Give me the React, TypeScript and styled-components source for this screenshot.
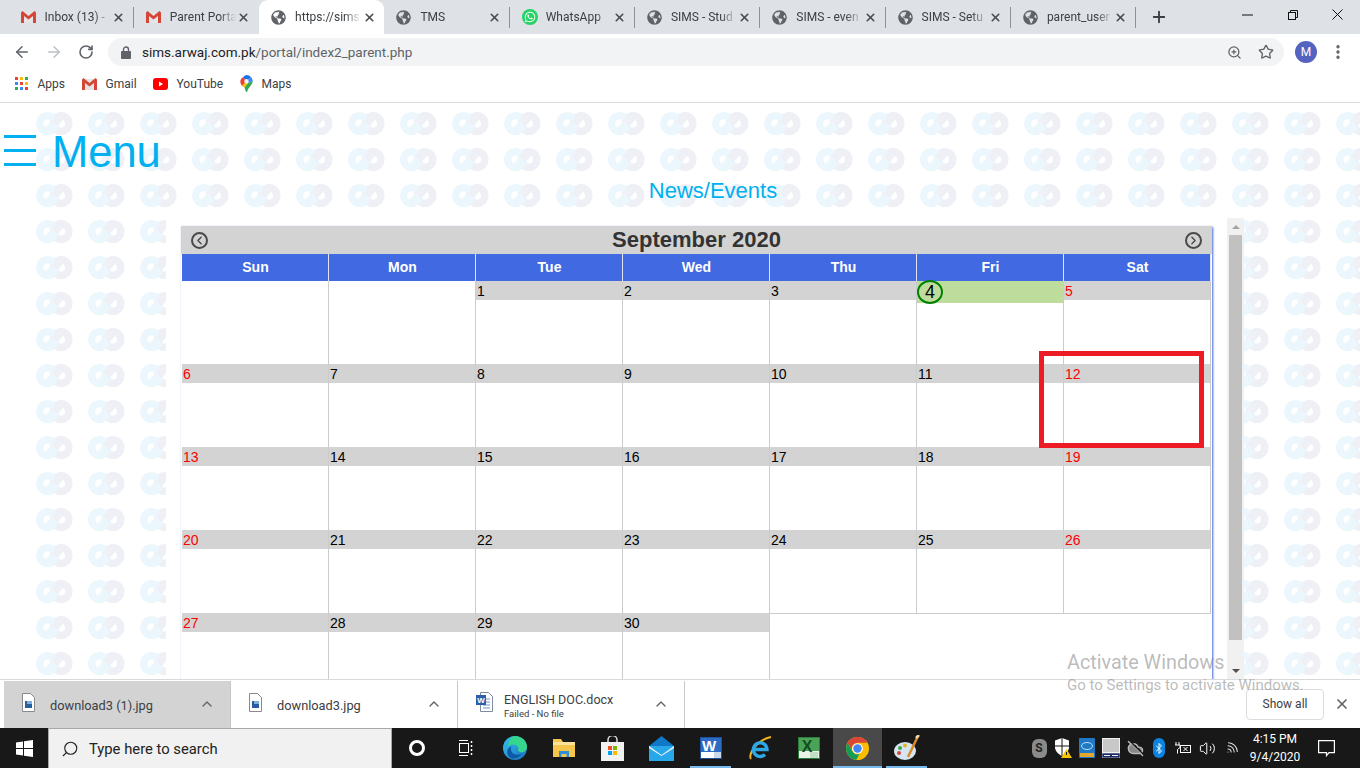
import styled, { createGlobalStyle } from "styled-components";
import {
  ArrowLeft,
  ArrowRight,
  Bluetooth,
  ChevronLeft,
  ChevronRight,
  ChevronUp,
  CloudOff,
  EllipsisVertical,
  Plus,
  RotateCw,
  Search,
  Star,
  Volume2,
  Wifi,
  X,
  ZoomIn,
} from "lucide-react";
import { FaGlobeAmericas, FaWhatsapp } from "react-icons/fa";

const UI_FONT = `Roboto, "Liberation Sans", sans-serif`;
const PAGE_FONT = `"Liberation Sans", Arial, sans-serif`;

const patternSvg = `<svg xmlns="http://www.w3.org/2000/svg" width="52" height="36" viewBox="0 0 52 36"><g fill="none" stroke-width="7.500"><circle cx="25" cy="11.500" r="7.800" stroke="#eff0f6"/><circle cx="11.500" cy="11.500" r="7.800" stroke="#ecf7fd"/><path d="M18 12L27 2" stroke="#eff0f6" stroke-width="8"/><path d="M10 21L18.500 11.500" stroke="#ecf7fd" stroke-width="8"/></g></svg>`;
const patternUrl = `url("data:image/svg+xml,${encodeURIComponent(patternSvg)}")`;

const GlobalStyle = createGlobalStyle`
  html, body {
    margin: 0;
    padding: 0;
    overflow: hidden;
  }
  * {
    box-sizing: border-box;
  }
`;

function GmailIcon() {
  return (
    <svg width="15" height="12" viewBox="0 0 15 12">
      <path d="M1 1h13v11H1z" fill="#e4e4e4" />
      <path d="M0 1.500L1.500 0 7.500 5 13.500 0 15 1.500V12h-3V5L7.500 8.500 3 5v7H0z" fill="#d44638" />
    </svg>
  );
}

function YoutubeIcon() {
  return (
    <svg width="15" height="12" viewBox="0 0 15 12">
      <rect width="15" height="12" rx="3" fill="#f00" />
      <path d="M6 3.500L10 6 6 8.500z" fill="#fff" />
    </svg>
  );
}

function MapsIcon() {
  return (
    <svg width="13" height="17" viewBox="0 0 13 17">
      <path d="M6.500 0A6 6 0 0 1 11 2L6.500 6.500 3 2.200A6 6 0 0 1 6.500 0z" fill="#1a73e8" />
      <path d="M3 2.200L6.500 6.500 2 11C1 9.500.3 8 .3 6.300 .3 4.800 1.500 3.200 3 2.200z" fill="#ea4335" />
      <path d="M11 2c1 1 1.700 2.700 1.700 4.300L8 8 6.500 6.500z" fill="#4285f4" />
      <path d="M12.700 6.300C12.700 9.500 8.500 12 7 17L6 17 4.500 12.500 8 8z" fill="#34a853" />
      <path d="M2 11L6.500 6.500 8 8 4.500 12.500z" fill="#fbbc04" />
      <circle cx="6.500" cy="6.300" r="2.200" fill="#fff" opacity=".9" />
    </svg>
  );
}

function AppsIcon() {
  const colors = ["#ea4335", "#fbbc04", "#34a853", "#4285f4", "#ea4335", "#fbbc04", "#34a853", "#4285f4", "#ea4335"];
  return (
    <svg width="14" height="13" viewBox="0 0 14 13">
      {colors.map((c, i) => (
        <rect key={i} x={(i % 3) * 5} y={Math.floor(i / 3) * 5} width="3" height="3" fill={c} />
      ))}
    </svg>
  );
}

function LockIcon() {
  return (
    <svg width="10" height="13" viewBox="0 0 10 13">
      <path d="M2.500 5V3.500a2.500 2.500 0 0 1 5 0V5" fill="none" stroke="#5f6368" strokeWidth="1.400" />
      <rect y="5" width="10" height="8" rx="1" fill="#5f6368" />
    </svg>
  );
}

function MinimizeGlyph() {
  return (
    <svg width="11" height="2" viewBox="0 0 11 2">
      <path d="M0 1h11" stroke="#111" />
    </svg>
  );
}

function RestoreGlyph() {
  return (
    <svg width="10" height="10" viewBox="0 0 10 10" fill="none" stroke="#111">
      <path d="M2.500 2.500V.5h7v7h-2" />
      <rect x=".5" y="2.500" width="7" height="7" />
    </svg>
  );
}

function CloseGlyph() {
  return (
    <svg width="11" height="11" viewBox="0 0 11 11">
      <path d="M.5.5l10 10M10.500.5l-10 10" stroke="#111" />
    </svg>
  );
}

function FileThumb() {
  return (
    <svg width="13" height="19" viewBox="0 0 13 19">
      <path d="M.5.5h8l4 4v14H.5z" fill="#fff" stroke="#8a8a8a" />
      <rect x="3" y="8" width="7" height="7" fill="#2a5d9c" />
      <rect x="5" y="8" width="5" height="3" fill="#7db0de" />
    </svg>
  );
}

function WordDocIcon() {
  return (
    <svg width="17" height="20" viewBox="0 0 17 20">
      <path d="M4.500.5h8l4 4v15h-12z" fill="#fff" stroke="#7e8ba0" />
      <path d="M7 7h7M7 10h7M7 13h7M7 16h7" stroke="#6b94c9" />
      <rect y="3" width="10" height="10" fill="#2b5faa" />
      <text x="5" y="11" fontSize="8" fontWeight="700" fill="#fff" textAnchor="middle" fontFamily="Liberation Sans">W</text>
    </svg>
  );
}

function WindowsLogo() {
  return (
    <svg width="17" height="17" viewBox="0 0 17 17" fill="#fff">
      <path d="M0 2.400L7 1.400V8H0zM8 1.300L17 0V8H8zM0 9H7V15.600L0 14.600zM8 9H17V17L8 15.700z" />
    </svg>
  );
}

function TaskViewIcon() {
  return (
    <svg width="16" height="16" viewBox="0 0 16 16" fill="none" stroke="#fff">
      <path d="M1 .5h9M1 15.500h9" />
      <rect x="1.500" y="3.500" width="9" height="9" />
      <path d="M13.500 1v2M13.500 5v2M13.500 9v2M13.500 13v2" strokeWidth="1.500" />
    </svg>
  );
}

function EdgeIcon() {
  return (
    <svg width="24" height="24" viewBox="0 0 24 24">
      <defs>
        <linearGradient id="edgeTop" x1="0" y1="0" x2="1" y2="1">
          <stop offset="0" stopColor="#35c1f1" />
          <stop offset="1" stopColor="#1b6fc0" />
        </linearGradient>
      </defs>
      <circle cx="12" cy="12" r="12" fill="url(#edgeTop)" />
      <path d="M12 0c7 0 12 5 12 11 0 4-4 6-7 5-2-.8-2.500-2.500-1.500-4-1-4-8-5-11-1C6 4 8 0 12 0z" fill="#36d68e" />
      <path d="M10 10c-3 0-3 6 1 8 3 1.500 6 .5 8-.5-3 5-9 6-12 4C3 19 3 11 10 10z" fill="#0c59a4" />
    </svg>
  );
}

function FolderIcon() {
  return (
    <svg width="22" height="22" viewBox="0 0 22 22">
      <path d="M0 2h8l2 3h12v15H0z" fill="#f6c54c" />
      <rect y="5" width="22" height="3" fill="#fbe29a" />
      <path d="M6 14h10v6h-2.500v-3h-5v3H6z" fill="#2f8fd6" />
    </svg>
  );
}

function StoreIcon() {
  return (
    <svg width="23" height="25" viewBox="0 0 23 25">
      <path d="M7 7V4a4.500 4.500 0 0 1 9 0v3" fill="none" stroke="#ddd" strokeWidth="1.500" />
      <rect y="6" width="23" height="19" fill="#f2f2f2" />
      <rect x="7" y="10" width="4" height="4" fill="#f25022" />
      <rect x="12" y="10" width="4" height="4" fill="#7fba00" />
      <rect x="7" y="15" width="4" height="4" fill="#00a4ef" />
      <rect x="12" y="15" width="4" height="4" fill="#ffb900" />
    </svg>
  );
}

function MailIcon() {
  return (
    <svg width="25" height="25" viewBox="0 0 25 25">
      <path d="M0 10L12.500 0 25 10z" fill="#0f78c8" />
      <rect y="10" width="25" height="15" fill="#28a8ea" />
      <path d="M0 10l12.500 9L25 10v2l-12.500 8L0 12z" fill="#e8f4fc" />
    </svg>
  );
}

function WordIcon() {
  return (
    <svg width="22" height="22" viewBox="0 0 22 22">
      <rect x=".5" y=".5" width="21" height="21" fill="#fff" stroke="#1f4f9e" />
      <rect x="1" y="1" width="20" height="14" fill="#2d6cc5" />
      <text x="9" y="14" fontSize="15" fontWeight="700" fill="#fff" textAnchor="middle" fontFamily="Liberation Sans">W</text>
      <path d="M14 15h7v6h-7z" fill="#c9d7ea" />
    </svg>
  );
}

function IeIcon() {
  return (
    <svg width="24" height="24" viewBox="0 0 24 24" fill="none">
      <path d="M3 23C0 19 8 4 23 1" stroke="#efb31f" strokeWidth="1.800" />
      <path d="M6 13.500h13a6.800 6.800 0 1 0-2 5" stroke="#2fa7e3" strokeWidth="3.400" />
    </svg>
  );
}

function ExcelIcon() {
  return (
    <svg width="22" height="22" viewBox="0 0 22 22">
      <rect x=".5" y=".5" width="21" height="21" fill="#e9f3e6" stroke="#2f7d3c" />
      <rect x="1" y="1" width="20" height="13" fill="#4aa357" />
      <text x="9" y="15" fontSize="16" fontWeight="700" fill="#134f1f" textAnchor="middle" fontFamily="Liberation Sans">X</text>
      <path d="M12 16h8M12 18h8M12 20h8" stroke="#9cc7a3" />
    </svg>
  );
}

function ChromeIcon() {
  return (
    <svg width="23" height="23" viewBox="0 0 24 24">
      <circle cx="12" cy="12" r="12" fill="#fbbc04" />
      <path d="M1.600 6A12 12 0 0 1 22.400 6H12a6 6 0 0 0-5.200 9z" fill="#db4437" />
      <path d="M1.600 6L6.800 15A6 6 0 0 0 14 17.700L10.600 23.900A12 12 0 0 1 1.600 6z" fill="#0f9d58" />
      <circle cx="12" cy="12" r="5.600" fill="#fff" />
      <circle cx="12" cy="12" r="4.400" fill="#4285f4" />
    </svg>
  );
}

function PaintIcon() {
  return (
    <svg width="26" height="27" viewBox="0 0 26 27">
      <ellipse cx="11" cy="16" rx="11" ry="9" fill="#d5e6f2" />
      <circle cx="6" cy="13" r="2" fill="#3fa34d" />
      <circle cx="11" cy="10.500" r="2" fill="#e6b422" />
      <circle cx="5" cy="18" r="2" fill="#d9453d" />
      <path d="M14 22L24 1" stroke="#d98a2b" strokeWidth="2.500" />
      <path d="M22 3L25 0" stroke="#f3d9a4" strokeWidth="2.500" />
    </svg>
  );
}

function ShieldIcon() {
  return (
    <svg width="18" height="20" viewBox="0 0 18 20">
      <path d="M8 0l7 2.500V9c0 4-3 7-7 9-4-2-7-5-7-9V2.500z" fill="#fff" />
      <path d="M8 0v18M1 8h14" stroke="#161616" />
      <path d="M12.500 11L18 20H7z" fill="#f7c600" />
      <path d="M12.500 14v3" stroke="#161616" />
    </svg>
  );
}

function IntelIcon() {
  return (
    <svg width="16" height="20" viewBox="0 0 16 20">
      <rect width="16" height="20" rx="1" fill="#1f79c4" />
      <rect x="1" y="15" width="14" height="4" fill="#e3a72f" />
      <ellipse cx="8" cy="8" rx="5.500" ry="3.500" fill="none" stroke="#bfe0f7" />
    </svg>
  );
}

function LaptopIcon() {
  return (
    <svg width="18" height="20" viewBox="0 0 18 20">
      <rect x=".5" y=".5" width="17" height="14" fill="#c8c8c8" stroke="#f0f0f0" />
      <rect y="15" width="18" height="5" fill="#1d2a64" stroke="#f0f0f0" strokeWidth=".6" />
      <path d="M2 17.500h6M10 17.500h6" stroke="#f0f0f0" />
    </svg>
  );
}

function PlugIcon() {
  return (
    <svg width="16" height="14" viewBox="0 0 16 14" fill="none" stroke="#fff">
      <path d="M1 1v3M4 1v3M0 4h5v2.500L2.500 8.500v4" />
      <rect x="5.500" y="4.500" width="10" height="7" />
      <path d="M8.500 6l4 4M12.500 6l-4 4" />
    </svg>
  );
}

function ActionCenterIcon() {
  return (
    <svg width="17" height="17" viewBox="0 0 17 17" fill="none" stroke="#fff" strokeWidth="1.200">
      <path d="M.6.6h15.800v12H11l-2.500 3v-3H.6z" />
    </svg>
  );
}

const tabs = [
  { title: "Inbox (13) -", icon: "gmail" },
  { title: "Parent Porta", icon: "gmail" },
  { title: "https://sims", icon: "globe", active: true },
  { title: "TMS", icon: "globe" },
  { title: "WhatsApp", icon: "whatsapp" },
  { title: "SIMS - Stud", icon: "globe" },
  { title: "SIMS - even", icon: "globe" },
  { title: "SIMS - Setu", icon: "globe" },
  { title: "parent_user", icon: "globe" },
];

const weekDays = ["Sun", "Mon", "Tue", "Wed", "Thu", "Fri", "Sat"];
const TODAY = 4;
const LEAD_BLANKS = 2;
const LAST_DAY = 30;

function tabIcon(icon: string) {
  if (icon === "gmail") return <GmailIcon />;
  if (icon === "whatsapp") {
    return (
      <WhatsappBadge>
        <FaWhatsapp size={12} color="#fff" />
      </WhatsappBadge>
    );
  }
  return <FaGlobeAmericas size={15} color="#5f6368" />;
}

function App() {
  const days = Array.from({ length: LAST_DAY }, (_, i) => i + 1);
  const trailing = 35 - LEAD_BLANKS - LAST_DAY;

  return (
    <Screen>
      <GlobalStyle />
      <TabStrip>
        {tabs.map((t, i) => (
          <Tab key={i} $active={t.active} $divider={!t.active && !tabs[i + 1]?.active}>
            <TabIcon>{tabIcon(t.icon)}</TabIcon>
            <TabTitle>{t.title}</TabTitle>
            <TabClose>
              <X size={13} strokeWidth={3} color="#494c50" />
            </TabClose>
          </Tab>
        ))}
        <NewTab>
          <Plus size={18} strokeWidth={2.5} color="#3c4043" />
        </NewTab>
        <WindowControls>
          <WindowButton>
            <MinimizeGlyph />
          </WindowButton>
          <WindowButton>
            <RestoreGlyph />
          </WindowButton>
          <WindowButton>
            <CloseGlyph />
          </WindowButton>
        </WindowControls>
      </TabStrip>

      <Toolbar>
        <NavButton>
          <ArrowLeft size={18} color="#5f6368" />
        </NavButton>
        <NavButton>
          <ArrowRight size={18} color="#bdc1c6" />
        </NavButton>
        <NavButton>
          <RotateCw size={16} strokeWidth={2.4} color="#5f6368" />
        </NavButton>
        <Omnibox>
          <LockIcon />
          <UrlText>
            sims.arwaj.com.pk<UrlPath>/portal/index2_parent.php</UrlPath>
          </UrlText>
          <OmniAction>
            <ZoomIn size={15} color="#5f6368" />
          </OmniAction>
          <OmniAction>
            <Star size={16} color="#5f6368" />
          </OmniAction>
        </Omnibox>
        <Avatar>M</Avatar>
        <MenuDots>
          <EllipsisVertical size={18} strokeWidth={2.5} color="#5f6368" />
        </MenuDots>
      </Toolbar>

      <Bookmarks>
        <Bookmark $width={67}>
          <AppsIcon />
          Apps
        </Bookmark>
        <Bookmark $width={71}>
          <GmailIcon />
          Gmail
        </Bookmark>
        <Bookmark $width={87}>
          <YoutubeIcon />
          YouTube
        </Bookmark>
        <Bookmark $width={70}>
          <MapsIcon />
          Maps
        </Bookmark>
      </Bookmarks>

      <Main>
        <MenuRow>
          <Burger>
            <span />
            <span />
            <span />
          </Burger>
          <MenuLabel>Menu</MenuLabel>
        </MenuRow>
        <NewsTitle>News/Events</NewsTitle>
        <Frame>
          <FrameBody>
            <Calendar>
              <MonthBar>
                <MonthNav>
                  <ChevronLeft size={13} strokeWidth={2.4} color="#444" />
                </MonthNav>
                <MonthTitle>September 2020</MonthTitle>
                <MonthNav>
                  <ChevronRight size={13} strokeWidth={2.4} color="#444" />
                </MonthNav>
              </MonthBar>
              <DaysGrid>
                {weekDays.map((d) => (
                  <WeekHead key={d}>{d}</WeekHead>
                ))}
                {Array.from({ length: LEAD_BLANKS }, (_, i) => (
                  <DayCell key={`lead-${i}`} />
                ))}
                {days.map((d) => {
                  const col = (d + LEAD_BLANKS - 1) % 7;
                  const weekend = col === 0 || col === 6;
                  return (
                    <DayCell key={d}>
                      {d === TODAY ? (
                        <TodayBar>
                          <TodayCircle>{d}</TodayCircle>
                        </TodayBar>
                      ) : (
                        <DayLabel $weekend={weekend}>{d}</DayLabel>
                      )}
                    </DayCell>
                  );
                })}
                {Array.from({ length: trailing }, (_, i) => (
                  <TrailingCell key={`trail-${i}`} />
                ))}
              </DaysGrid>
            </Calendar>
            <Annotation />
          </FrameBody>
          <Scrollbar>
            <ScrollArrow>
              <ArrowUpShape />
            </ScrollArrow>
            <ScrollThumb />
            <ScrollArrow>
              <ArrowDownShape />
            </ScrollArrow>
          </Scrollbar>
        </Frame>
      </Main>

      <DownloadBar>
        <DownloadItem $active>
          <ThumbSlot>
            <FileThumb />
          </ThumbSlot>
          <DownloadName>download3 (1).jpg</DownloadName>
          <DownloadChevron>
            <ChevronUp size={16} color="#5f6368" />
          </DownloadChevron>
        </DownloadItem>
        <DownloadItem>
          <ThumbSlot>
            <FileThumb />
          </ThumbSlot>
          <DownloadName>download3.jpg</DownloadName>
          <DownloadChevron>
            <ChevronUp size={16} color="#5f6368" />
          </DownloadChevron>
        </DownloadItem>
        <DownloadItem>
          <ThumbSlot>
            <WordDocIcon />
          </ThumbSlot>
          <DownloadText>
            <DownloadFile>ENGLISH DOC.docx</DownloadFile>
            <DownloadStatus>Failed - No file</DownloadStatus>
          </DownloadText>
          <DownloadChevron>
            <ChevronUp size={16} color="#5f6368" />
          </DownloadChevron>
        </DownloadItem>
        <ShowAll>Show all</ShowAll>
        <CloseShelf>
          <X size={16} strokeWidth={2.5} color="#5f6368" />
        </CloseShelf>
      </DownloadBar>

      <Taskbar>
        <StartButton>
          <WindowsLogo />
        </StartButton>
        <SearchBox>
          <Search size={18} strokeWidth={1.5} color="#222" style={{ transform: "scaleX(-1)" }} />
          Type here to search
        </SearchBox>
        <TaskSlot>
          <CortanaRing />
        </TaskSlot>
        <TaskSlot>
          <TaskViewIcon />
        </TaskSlot>
        <TaskSlot>
          <EdgeIcon />
        </TaskSlot>
        <TaskSlot>
          <FolderIcon />
        </TaskSlot>
        <TaskSlot>
          <StoreIcon />
        </TaskSlot>
        <TaskSlot>
          <MailIcon />
        </TaskSlot>
        <TaskSlot $running>
          <WordIcon />
        </TaskSlot>
        <TaskSlot>
          <IeIcon />
        </TaskSlot>
        <TaskSlot>
          <ExcelIcon />
        </TaskSlot>
        <TaskSlot $running $active>
          <ChromeIcon />
        </TaskSlot>
        <TaskSlot $running>
          <PaintIcon />
        </TaskSlot>
        <Tray>
          <TrayIcon>
            <SkypeBadge>S</SkypeBadge>
          </TrayIcon>
          <TrayIcon>
            <ShieldIcon />
          </TrayIcon>
          <TrayIcon>
            <IntelIcon />
          </TrayIcon>
          <TrayIcon>
            <LaptopIcon />
          </TrayIcon>
          <TrayIcon>
            <CloudOff size={17} color="#bbb" fill="#888" />
          </TrayIcon>
          <TrayIcon>
            <BluetoothBadge>
              <Bluetooth size={13} color="#fff" />
            </BluetoothBadge>
          </TrayIcon>
          <TrayIcon>
            <PlugIcon />
          </TrayIcon>
          <TrayIcon>
            <Volume2 size={17} strokeWidth={1.4} color="#fff" />
          </TrayIcon>
          <TrayIcon>
            <Wifi size={15} strokeWidth={1.7} color="#ddd" style={{ transform: "rotate(45deg)" }} />
          </TrayIcon>
        </Tray>
        <Clock>
          <span>4:15 PM</span>
          <span>9/4/2020</span>
        </Clock>
        <ActionCenter>
          <ActionCenterIcon />
        </ActionCenter>
      </Taskbar>

      <Watermark>
        <WatermarkTitle>Activate Windows</WatermarkTitle>
        <WatermarkHint>Go to Settings to activate Windows.</WatermarkHint>
      </Watermark>
    </Screen>
  );
}

const Screen = styled.div`
  position: relative;
  width: 1360px;
  height: 768px;
  display: flex;
  flex-direction: column;
  overflow: hidden;
  background: #fff;
  font-family: ${UI_FONT};
`;

const TabStrip = styled.div`
  height: 34px;
  flex: none;
  display: flex;
  padding-left: 8.500px;
  background: #dee1e6;
`;

const Tab = styled.div<{ $active?: boolean; $divider?: boolean }>`
  position: relative;
  width: 125.300px;
  flex: none;
  display: flex;
  align-items: center;
  padding-left: 12px;
  border-radius: 9px 9px 0 0;
  background: ${(p) => (p.$active ? "#fff" : "transparent")};

  &::after {
    content: "";
    display: ${(p) => (p.$divider ? "block" : "none")};
    position: absolute;
    right: 0;
    top: 7px;
    bottom: 6px;
    width: 1px;
    background: #8f9296;
  }
`;

const TabIcon = styled.div`
  width: 24px;
  flex: none;
  display: flex;
  align-items: center;
`;

const WhatsappBadge = styled.span`
  width: 16px;
  height: 16px;
  display: flex;
  align-items: center;
  justify-content: center;
  border-radius: 50%;
  background: #25d366;
`;

const TabTitle = styled.div`
  width: 66px;
  flex: none;
  font-size: 12px;
  white-space: nowrap;
  overflow: hidden;
  color: #3c4043;
  -webkit-mask-image: linear-gradient(to right, #000 75%, transparent 100%);
  mask-image: linear-gradient(to right, #000 75%, transparent 100%);
`;

const TabClose = styled.div`
  width: 16px;
  flex: none;
  display: flex;
  justify-content: center;
`;

const NewTab = styled.div`
  width: 46px;
  flex: none;
  display: flex;
  align-items: center;
  justify-content: center;
`;

const WindowControls = styled.div`
  display: flex;
  margin-left: auto;
`;

const WindowButton = styled.div`
  width: 45px;
  height: 29px;
  display: flex;
  align-items: center;
  justify-content: center;
`;

const Toolbar = styled.div`
  height: 36px;
  flex: none;
  display: flex;
  align-items: center;
  padding-left: 6px;
  background: #fff;
`;

const NavButton = styled.div`
  width: 32px;
  flex: none;
  display: flex;
  justify-content: center;
`;

const Omnibox = styled.div`
  width: 1176px;
  height: 28px;
  flex: none;
  margin-left: 6px;
  display: flex;
  align-items: center;
  padding: 0 2px 0 13px;
  border-radius: 14px;
  background: #f1f3f4;
`;

const UrlText = styled.div`
  flex: 1;
  margin-left: 11px;
  font-size: 13.500px;
  color: #202124;
`;

const UrlPath = styled.span`
  color: #5f6368;
`;

const OmniAction = styled.div`
  width: 32px;
  display: flex;
  justify-content: center;
`;

const Avatar = styled.div`
  width: 22px;
  height: 22px;
  flex: none;
  margin-left: 11px;
  border-radius: 50%;
  background: #5463bf;
  color: #fff;
  font-size: 12px;
  line-height: 22px;
  text-align: center;
`;

const MenuDots = styled.div`
  margin-left: 12px;
  display: flex;
`;

const Bookmarks = styled.div`
  height: 33px;
  flex: none;
  display: flex;
  align-items: center;
  padding: 0 0 5px 15px;
  border-bottom: 1px solid #d9d9d9;
`;

const Bookmark = styled.div<{ $width: number }>`
  width: ${(p) => p.$width}px;
  flex: none;
  display: flex;
  align-items: center;
  gap: 8.500px;
  font-size: 12px;
  color: #3c4043;
`;

const Main = styled.div`
  flex: 1;
  min-height: 0;
  display: flex;
  flex-direction: column;
  overflow: hidden;
  border-bottom: 1px solid #d9d9d9;
  background:
    linear-gradient(#fff, #fff) 0 0 / 36px 100% no-repeat,
    ${patternUrl} 36px 9px repeat,
    #fff;
  font-family: ${PAGE_FONT};
`;

const MenuRow = styled.div`
  height: 50px;
  margin-top: 24px;
  flex: none;
  display: flex;
  align-items: center;
  padding-left: 4px;
  gap: 16px;
`;

const Burger = styled.div`
  width: 32px;
  margin-top: -3px;
  display: flex;
  flex-direction: column;
  gap: 11px;

  span {
    height: 3.300px;
    background: #00b0f0;
  }
`;

const MenuLabel = styled.div`
  font-size: 43.500px;
  line-height: 50px;
  color: #00b0f0;
`;

const NewsTitle = styled.div`
  flex: none;
  margin: 1px 0 15px 66px;
  font-size: 22px;
  line-height: 25px;
  text-align: center;
  color: #00b0f0;
`;

const Frame = styled.div`
  flex: 1;
  min-height: 0;
  width: 1078px;
  margin-left: 166px;
  display: flex;
  background: #fff;
`;

const FrameBody = styled.div`
  position: relative;
  flex: 1;
  overflow: hidden;
  padding: 8px 0 0 15px;
`;

const Calendar = styled.div`
  width: 1031px;
  box-shadow: 1px 1px 2px #4169e1;
  background: #fff;
`;

const MonthBar = styled.div`
  height: 28px;
  display: flex;
  align-items: center;
  justify-content: space-between;
  padding: 0 10px;
  background: #d3d3d3;
`;

const MonthNav = styled.div`
  width: 17px;
  height: 17px;
  display: flex;
  align-items: center;
  justify-content: center;
  border: 2px solid #4a4a4a;
  border-radius: 50%;
`;

const MonthTitle = styled.div`
  font-size: 22px;
  font-weight: 700;
  color: #333;
`;

const DaysGrid = styled.div`
  display: grid;
  grid-template-columns: repeat(7, 147px);
  padding-left: 1px;
`;

const WeekHead = styled.div`
  height: 27px;
  padding-left: 1px;
  border-right: 1px solid #dfe5f8;
  background: #4169e1;
  color: #fff;
  font-size: 14px;
  font-weight: 700;
  line-height: 26px;
  text-align: center;
`;

const DayCell = styled.div`
  height: 83px;
  border-right: 1px solid #ccc;
`;

const TrailingCell = styled.div`
  height: 83px;
  border-top: 1px solid #ccc;
`;

const DayLabel = styled.div<{ $weekend: boolean }>`
  height: 19px;
  padding-left: 1px;
  background: #d3d3d3;
  color: ${(p) => (p.$weekend ? "#f00" : "#000")};
  font-size: 14px;
  line-height: 21px;
`;

const TodayBar = styled.div`
  height: 22px;
  background: #bedc9c;
`;

const TodayCircle = styled.div`
  position: relative;
  top: -1px;
  width: 26px;
  height: 24px;
  border: 2px solid #008000;
  border-radius: 50%;
  color: #000;
  font-size: 18px;
  line-height: 20px;
  text-align: center;
`;

const Annotation = styled.div`
  position: absolute;
  left: 873px;
  top: 133px;
  width: 165px;
  height: 97px;
  border: 5px solid #ed1c24;
`;

const Scrollbar = styled.div`
  width: 17px;
  flex: none;
  display: flex;
  flex-direction: column;
  background: #f1f1f1;
`;

const ScrollArrow = styled.div`
  height: 17px;
  flex: none;
  display: flex;
  align-items: center;
  justify-content: center;

  &:last-child {
    margin-top: auto;
  }
`;

const ArrowUpShape = styled.div`
  border: 4px solid transparent;
  border-top: 0;
  border-bottom: 4px solid #a3a3a3;
`;

const ArrowDownShape = styled.div`
  border: 4px solid transparent;
  border-bottom: 0;
  border-top: 4px solid #505050;
`;

const ScrollThumb = styled.div`
  height: 405px;
  flex: none;
  margin: 0 2px;
  background: #c1c1c1;
`;

const DownloadBar = styled.div`
  height: 48px;
  flex: none;
  display: flex;
  align-items: center;
  padding-left: 4px;
  background: #fff;
`;

const DownloadItem = styled.div<{ $active?: boolean }>`
  position: relative;
  width: 227px;
  height: 47px;
  flex: none;
  display: flex;
  align-items: center;
  padding-left: 18px;
  gap: 15px;
  background: ${(p) => (p.$active ? "#d3d3d3" : "transparent")};
  border-right: 1px solid #c8c8c8;
`;

const ThumbSlot = styled.div`
  display: flex;
  margin-top: -4px;
`;

const DownloadName = styled.div`
  margin-top: 2px;
  font-size: 12.800px;
  color: #3c4043;
`;

const DownloadText = styled.div`
  display: flex;
  flex-direction: column;
  gap: 1px;
  margin: 2px 0 0 -4px;
`;

const DownloadFile = styled.div`
  font-size: 12.500px;
  color: #3c4043;
`;

const DownloadStatus = styled.div`
  font-size: 9.500px;
  color: #3c4043;
`;

const DownloadChevron = styled.div`
  position: absolute;
  right: 15px;
  top: 15px;
  display: flex;
`;

const ShowAll = styled.div`
  width: 78px;
  height: 31px;
  margin-left: auto;
  border: 1px solid #dadce0;
  border-radius: 4px;
  font-size: 12px;
  line-height: 29px;
  text-align: center;
  color: #3c4043;
`;

const CloseShelf = styled.div`
  width: 36px;
  display: flex;
  justify-content: center;
`;

const Taskbar = styled.div`
  height: 40px;
  flex: none;
  display: flex;
  align-items: stretch;
  background: #181818;
`;

const StartButton = styled.div`
  width: 48px;
  flex: none;
  display: flex;
  align-items: center;
  justify-content: center;
`;

const SearchBox = styled.div`
  width: 344px;
  flex: none;
  display: flex;
  align-items: center;
  gap: 10px;
  padding-left: 12px;
  border: 1px solid #a8a8a8;
  border-bottom: 0;
  background: #f1f1f1;
  font-size: 14.800px;
  color: #222;
`;

const TaskSlot = styled.div<{ $running?: boolean; $active?: boolean }>`
  position: relative;
  width: 49px;
  flex: none;
  display: flex;
  align-items: center;
  justify-content: center;
  background: ${(p) => (p.$active ? "#494949" : "transparent")};

  &::after {
    content: "";
    display: ${(p) => (p.$running ? "block" : "none")};
    position: absolute;
    bottom: 0;
    left: ${(p) => (p.$active ? "0" : "4px")};
    right: ${(p) => (p.$active ? "0" : "4px")};
    height: 2px;
    background: #76b9ed;
  }
`;

const CortanaRing = styled.div`
  width: 16px;
  height: 16px;
  border: 3px solid #fff;
  border-radius: 50%;
`;

const Tray = styled.div`
  flex: none;
  display: flex;
  align-items: center;
  margin-left: 96px;
`;

const TrayIcon = styled.div`
  width: 24px;
  flex: none;
  display: flex;
  justify-content: center;
`;

const SkypeBadge = styled.div`
  width: 15px;
  height: 19px;
  border-radius: 6px;
  background: #8a8a8a;
  color: #222;
  font-size: 12px;
  font-weight: 700;
  line-height: 19px;
  text-align: center;
`;

const BluetoothBadge = styled.div`
  width: 12px;
  height: 20px;
  display: flex;
  align-items: center;
  justify-content: center;
  border-radius: 6px;
  background: #0a84e0;
`;

const Clock = styled.div`
  width: 64px;
  flex: none;
  display: flex;
  flex-direction: column;
  align-items: center;
  justify-content: center;
  gap: 4px;
  font-size: 12px;
  color: #fff;
`;

const ActionCenter = styled.div`
  width: 38px;
  flex: none;
  display: flex;
  align-items: center;
  justify-content: center;
`;

const Watermark = styled.div`
  position: absolute;
  left: 1067px;
  top: 651px;
  pointer-events: none;
  color: rgba(130, 130, 130, 0.55);
`;

const WatermarkTitle = styled.div`
  font-size: 19.800px;
  line-height: 23px;
  white-space: nowrap;
`;

const WatermarkHint = styled.div`
  font-size: 15px;
  line-height: 22px;
  white-space: nowrap;
`;

export default App;
